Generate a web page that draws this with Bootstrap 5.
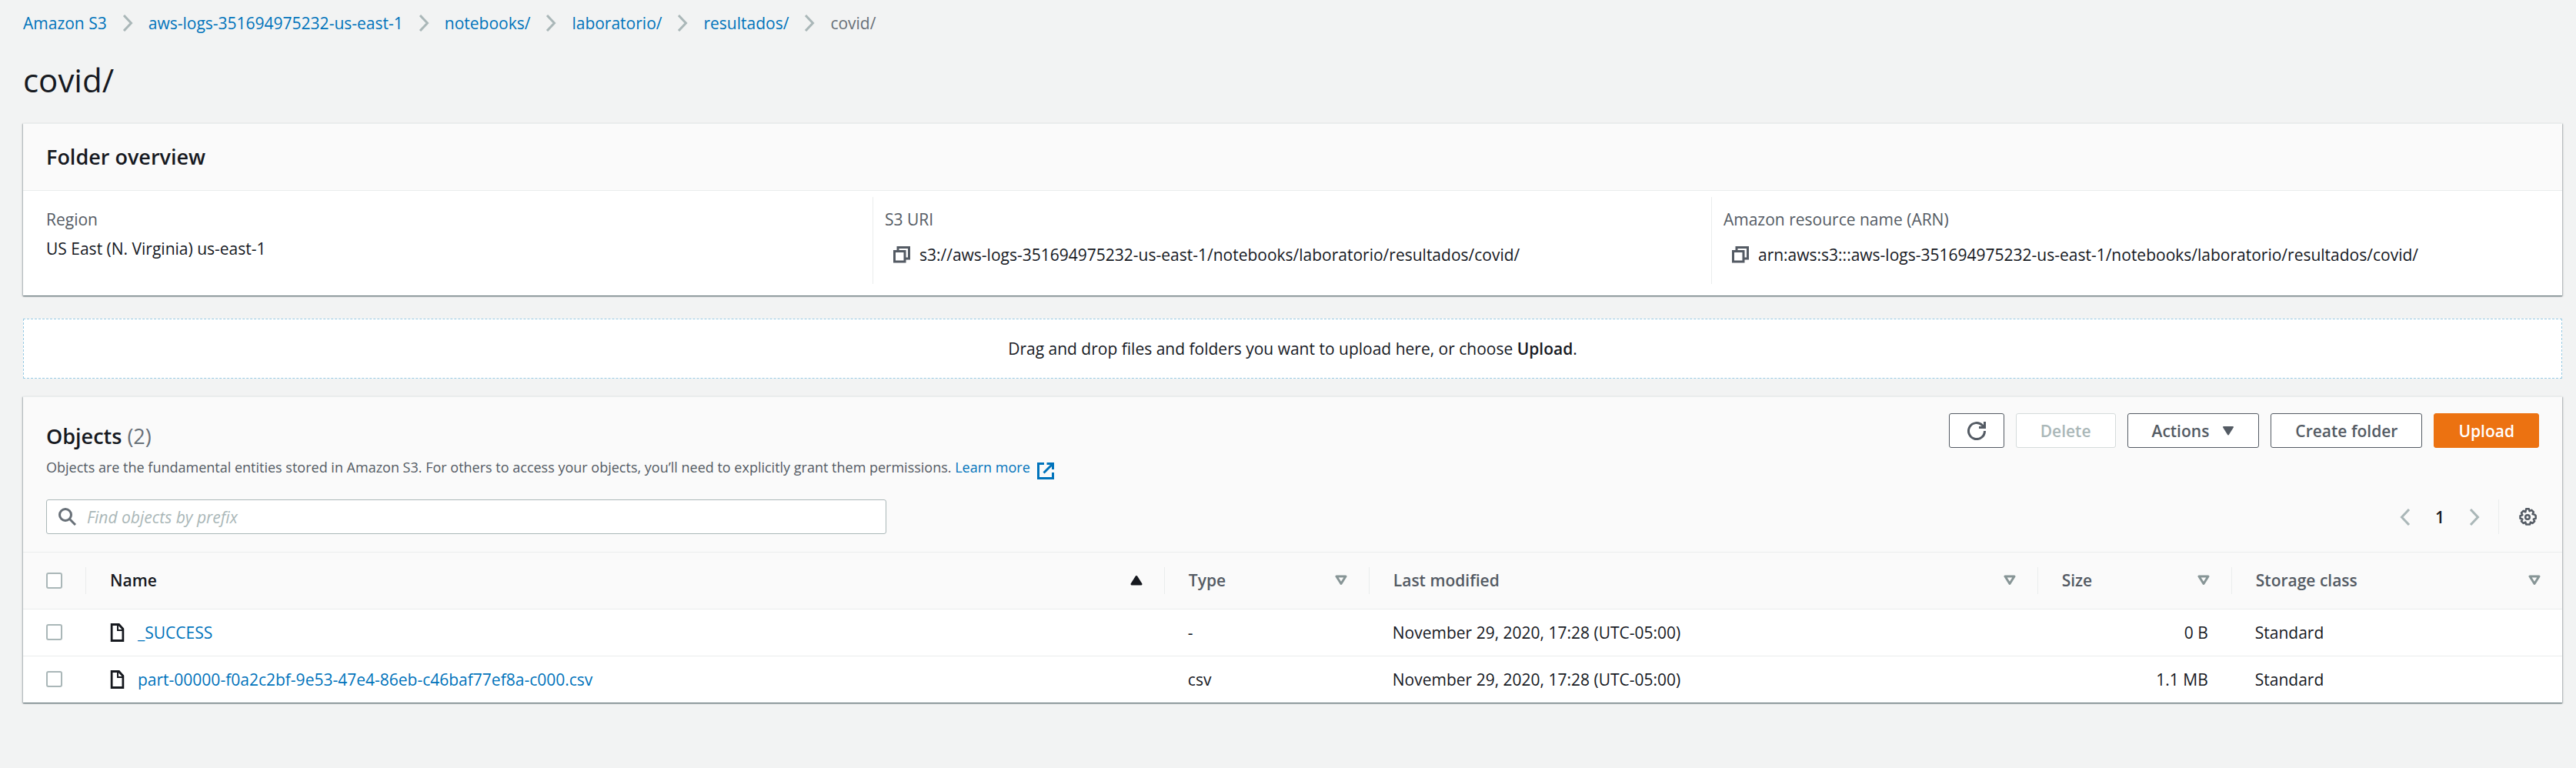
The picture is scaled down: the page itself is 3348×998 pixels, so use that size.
<!DOCTYPE html>
<html lang="en">
<head>
<meta charset="utf-8">
<meta name="viewport" content="width=device-width, initial-scale=1">
<title>covid/ - S3 bucket</title>
<link href="https://cdn.jsdelivr.net/npm/bootstrap@5.3.0/dist/css/bootstrap.min.css" rel="stylesheet">
<style>
  :root { --ink: #16191f; --muted: #545b64; --line: #eaeded; --soft: #aab7b8; --link: #0073bb; }
  body { background: #f2f3f3; color: var(--ink); font-family: "Open Sans", "Noto Sans", sans-serif; font-size: 21px; line-height: 30px; }
  a { color: var(--link); text-decoration: none; }
  a:hover { text-decoration: underline; }
  svg { flex: none; display: block; fill: none; }
  .page { padding: 15px 18px 30px 30px; }
  .crumbs { gap: 20px; margin-bottom: 32px; }
  .crumbs svg, .pager svg { stroke: var(--soft); stroke-width: 3; }
  .crumbs .current { color: #687078; }
  .page-title { font-size: 42px; line-height: 54px; font-weight: 400; margin-bottom: 29px; }
  .panel { background: #fff; border-top: 1px solid var(--line); box-shadow: 0 1px 1px rgba(0,28,36,.4), 1px 1px 2px rgba(0,28,36,.25), -1px 1px 2px rgba(0,28,36,.25); }
  .panel-head { background: #fafafa; border-bottom: 1px solid var(--line); padding: 25px 30px; }
  .panel-title { font-size: 27px; line-height: 36px; font-weight: 600; margin: 0; }
  .panel-title span { font-weight: 400; color: #687078; }
  .facts { padding: 8px 16px 15px 14px; margin: 0; }
  .fact { padding: 14px 15px 15px; border-left: 1px solid var(--line); }
  .fact:first-child { border-color: transparent; }
  .fact dt { font-weight: 400; color: var(--muted); margin-bottom: 8px; }
  .fact dd { margin: 0; }
  .copyable { min-height: 46px; gap: 12px; padding-left: 11px; }
  .bare { border: 0; background: none; padding: 0; color: var(--muted); }
  .dropzone { background: #fff; border: 1px dashed #99cbe4; padding: 23px 30px; margin: 30px 0 23px; }
  .dropzone strong { font-weight: 600; }
  .panel-head.tools { padding: 21px 30px 23px; }
  .tools .intro { padding-top: 12px; }
  .hint { font-size: 18px; line-height: 24px; color: var(--muted); margin: 10px 0 26px; }
  .hint svg { display: inline-block; vertical-align: -9px; margin-left: 5px; }
  .actions { gap: 15px; }
  .tool-btn { --bs-btn-color: #545b64; --bs-btn-bg: #fff; --bs-btn-border-color: #545b64; --bs-btn-hover-color: #16191f; --bs-btn-hover-bg: #fafafa; --bs-btn-hover-border-color: #16191f;
    --bs-btn-disabled-color: #aab7b8; --bs-btn-disabled-bg: #fff; --bs-btn-disabled-border-color: #d5dbdb; --bs-btn-disabled-opacity: 1;
    --bs-btn-font-size: 21px; --bs-btn-font-weight: 600; --bs-btn-line-height: 30px; --bs-btn-padding-x: 31px; --bs-btn-padding-y: 6px; --bs-btn-border-radius: 3px; height: 45px; display: inline-flex; align-items: center; }
  .tool-btn.primary { --bs-btn-color: #fff; --bs-btn-bg: #ec7211; --bs-btn-border-color: #ec7211; --bs-btn-hover-color: #fff; --bs-btn-hover-bg: #eb5f07; --bs-btn-hover-border-color: #eb5f07; }
  .tool-btn.square { --bs-btn-padding-x: 23px; }
  .caret { fill: currentColor; stroke: currentColor; stroke-width: 2; stroke-linejoin: round; margin-left: 17px; }
  .search { width: 33.7%; height: 45px; background: #fff; border: 1px solid var(--soft); border-radius: 3px; padding: 0 15px; gap: 14px; }
  .search svg { stroke: #687078; stroke-width: 3; }
  .search input { border: 0; outline: 0; flex: 1; min-width: 0; padding: 0; background: none; color: var(--ink); }
  .search input::placeholder { color: var(--soft); font-style: italic; opacity: 1; }
  .pager { height: 45px; font-weight: 600; gap: 32px; padding-right: 24px; border-right: 1px solid var(--line); }
  .prefs { padding: 0 3px 0 25px; }
  .objects { width: 100%; table-layout: fixed; border-collapse: collapse; }
  .objects thead tr { height: 73px; background: #fafafa; border-bottom: 1px solid var(--line); }
  .objects tbody tr { height: 61px; }
  .objects tbody tr + tr { border-top: 1px solid var(--line); }
  .objects th, .objects td { padding: 0; vertical-align: middle; }
  .objects td { padding: 0 31px 0 30px; white-space: nowrap; }
  .objects .pick { padding: 0 0 0 30px; }
  .th-in { height: 35px; padding: 0 28px 0 31px; border-right: 1px solid var(--line); font-weight: 600; color: var(--muted); }
  .pick .th-in { padding: 0; }
  .objects th:last-child .th-in { border-right: 0; }
  .th-in.sorted { color: var(--ink); }
  .sort { stroke: #879596; stroke-width: 3; stroke-linejoin: round; }
  .sorted .sort { stroke: var(--ink); fill: var(--ink); }
  .objects .form-check-input { width: 21px; height: 21px; margin: 0; border: 2px solid var(--soft); border-radius: 3px; display: block; }
  .file { gap: 17px; padding-left: 1px; }
  .col-pick { width: 82px; } .col-name { width: 42.48%; } .col-type { width: 8.06%; } .col-date { width: 26.33%; } .col-size { width: 7.64%; }
</style>
</head>
<body>
<svg width="0" height="0" class="position-absolute" aria-hidden="true">
  <symbol id="chev" viewBox="0 0 14 22"><path d="M2 1l9.500 10L2 21"/></symbol>
  <symbol id="copy" viewBox="0 0 22 22"><path d="M6 6V1.500h14.500V16H16M1.500 6.500H15v13.500H1.500z" stroke="currentColor" stroke-width="3"/></symbol>
  <symbol id="down" viewBox="0 0 16 14"><path d="M2 2h12L8 11.500z"/></symbol>
  <symbol id="file" viewBox="0 0 18 24"><path d="M1.500 1.500H11L16.500 7.500V22.500h-15z" stroke="#16191f" stroke-width="3"/><path d="M9.500 2v7H17" stroke="#16191f" stroke-width="2"/></symbol>
</svg>
<main class="page">
  <nav class="crumbs d-flex flex-wrap align-items-center" aria-label="Breadcrumb">
    <a href="#">Amazon S3</a><svg width="14" height="22"><use href="#chev"/></svg>
    <a href="#">aws-logs-351694975232-us-east-1</a><svg width="14" height="22"><use href="#chev"/></svg>
    <a href="#">notebooks/</a><svg width="14" height="22"><use href="#chev"/></svg>
    <a href="#">laboratorio/</a><svg width="14" height="22"><use href="#chev"/></svg>
    <a href="#">resultados/</a><svg width="14" height="22"><use href="#chev"/></svg>
    <span class="current" aria-current="page">covid/</span>
  </nav>
  <h1 class="page-title">covid/</h1>

  <section class="panel">
    <div class="panel-head"><h2 class="panel-title">Folder overview</h2></div>
    <dl class="facts row g-0">
      <div class="fact col-4"><dt>Region</dt><dd>US East (N. Virginia) us-east-1</dd></div>
      <div class="fact col-4"><dt>S3 URI</dt>
        <dd class="copyable d-flex align-items-center"><button type="button" class="bare" aria-label="Copy S3 URI"><svg width="22" height="22"><use href="#copy"/></svg></button><span>s3://aws-logs-351694975232-us-east-1/notebooks/laboratorio/resultados/covid/</span></dd></div>
      <div class="fact col-4"><dt>Amazon resource name (ARN)</dt>
        <dd class="copyable d-flex align-items-center"><button type="button" class="bare" aria-label="Copy ARN"><svg width="22" height="22"><use href="#copy"/></svg></button><span>arn:aws:s3:::aws-logs-351694975232-us-east-1/notebooks/laboratorio/resultados/covid/</span></dd></div>
    </dl>
  </section>

  <div class="dropzone text-center">Drag and drop files and folders you want to upload here, or choose <strong>Upload</strong>.</div>

  <section class="panel">
    <div class="panel-head tools">
      <div class="d-flex justify-content-between align-items-start">
        <div class="intro">
          <h2 class="panel-title">Objects <span>(2)</span></h2>
          <p class="hint">Objects are the fundamental entities stored in Amazon S3. For others to access your objects, you’ll need to explicitly grant them permissions. <a href="#">Learn more <svg width="22" height="22" viewBox="0 0 22 22" stroke="currentColor" stroke-width="3"><path d="M9 1.500H1.500v19h19V13M12.500 1.500h8V9M20 2L8.500 13.500"/></svg></a></p>
        </div>
        <div class="actions d-flex">
          <button type="button" class="btn tool-btn square" aria-label="Refresh"><svg width="24" height="24" viewBox="0 0 24 24" stroke="currentColor" stroke-width="3"><path d="M22.500 12A10.500 10.500 0 1 1 19.500 4.700L22 7.500M22.500 0v7.500H15"/></svg></button>
          <button type="button" class="btn tool-btn" disabled>Delete</button>
          <button type="button" class="btn tool-btn">Actions<svg class="caret" width="16" height="14"><use href="#down"/></svg></button>
          <button type="button" class="btn tool-btn">Create folder</button>
          <button type="button" class="btn tool-btn primary">Upload</button>
        </div>
      </div>
      <div class="d-flex justify-content-between align-items-center">
        <label class="search d-flex align-items-center">
          <svg width="23" height="23" viewBox="0 0 23 23"><circle cx="9" cy="9" r="7.500"/><path d="M14 14l8 8"/></svg>
          <input type="text" placeholder="Find objects by prefix" aria-label="Find objects by prefix">
        </label>
        <div class="d-flex align-items-center">
          <div class="pager d-flex align-items-center">
            <button type="button" class="bare" aria-label="Previous page"><svg width="14" height="22" viewBox="0 0 14 22"><path d="M12 1L2.500 11 12 21"/></svg></button>
            <span>1</span>
            <button type="button" class="bare" aria-label="Next page"><svg width="14" height="22"><use href="#chev"/></svg></button>
          </div>
          <button type="button" class="bare prefs" aria-label="Preferences"><svg width="24" height="24" viewBox="0 0 24 24" stroke="currentColor" stroke-width="2.500" stroke-linejoin="round"><path d="M10.200 1.300h3.600l.8 2.900 2.700-1.400 2.600 2.600-1.400 2.600 2.900.8 1.300 1.400v3.600l-2.900.8 1.400 2.700-2.600 2.600-2.700-1.400-.8 2.900h-5l-.8-2.900-2.700 1.400-2.600-2.600 1.400-2.700-2.900-.8v-3.600l2.900-.8L4 6.500l2.600-2.600 2.700 1.400z"/><circle cx="12" cy="12" r="2.800"/></svg></button>
        </div>
      </div>
    </div>
    <table class="objects">
      <colgroup><col class="col-pick"><col class="col-name"><col class="col-type"><col class="col-date"><col class="col-size"><col></colgroup>
      <thead>
        <tr>
          <th scope="col" class="pick"><div class="th-in d-flex align-items-center"><input class="form-check-input" type="checkbox" aria-label="Select all objects"></div></th>
          <th scope="col"><div class="th-in sorted d-flex align-items-center justify-content-between">Name<svg class="sort" width="16" height="14" viewBox="0 0 16 14"><path d="M2 12h12L8 2.500z"/></svg></div></th>
          <th scope="col"><div class="th-in d-flex align-items-center justify-content-between">Type<svg class="sort" width="16" height="14"><use href="#down"/></svg></div></th>
          <th scope="col"><div class="th-in d-flex align-items-center justify-content-between">Last modified<svg class="sort" width="16" height="14"><use href="#down"/></svg></div></th>
          <th scope="col"><div class="th-in d-flex align-items-center justify-content-between">Size<svg class="sort" width="16" height="14"><use href="#down"/></svg></div></th>
          <th scope="col"><div class="th-in d-flex align-items-center justify-content-between">Storage class<svg class="sort" width="16" height="14"><use href="#down"/></svg></div></th>
        </tr>
      </thead>
      <tbody>
        <tr>
          <td class="pick"><input class="form-check-input" type="checkbox" aria-label="Select _SUCCESS"></td>
          <td><a href="#" class="file d-flex align-items-center"><svg width="19" height="24" viewBox="0 0 18 24"><use href="#file"/></svg>_SUCCESS</a></td>
          <td>-</td><td>November 29, 2020, 17:28 (UTC-05:00)</td><td class="text-end">0 B</td><td>Standard</td>
        </tr>
        <tr>
          <td class="pick"><input class="form-check-input" type="checkbox" aria-label="Select part-00000"></td>
          <td><a href="#" class="file d-flex align-items-center"><svg width="19" height="24" viewBox="0 0 18 24"><use href="#file"/></svg>part-00000-f0a2c2bf-9e53-47e4-86eb-c46baf77ef8a-c000.csv</a></td>
          <td>csv</td><td>November 29, 2020, 17:28 (UTC-05:00)</td><td class="text-end">1.1 MB</td><td>Standard</td>
        </tr>
      </tbody>
    </table>
  </section>
</main>
<script src="https://cdn.jsdelivr.net/npm/bootstrap@5.3.0/dist/js/bootstrap.bundle.min.js"></script>
</body>
</html>
